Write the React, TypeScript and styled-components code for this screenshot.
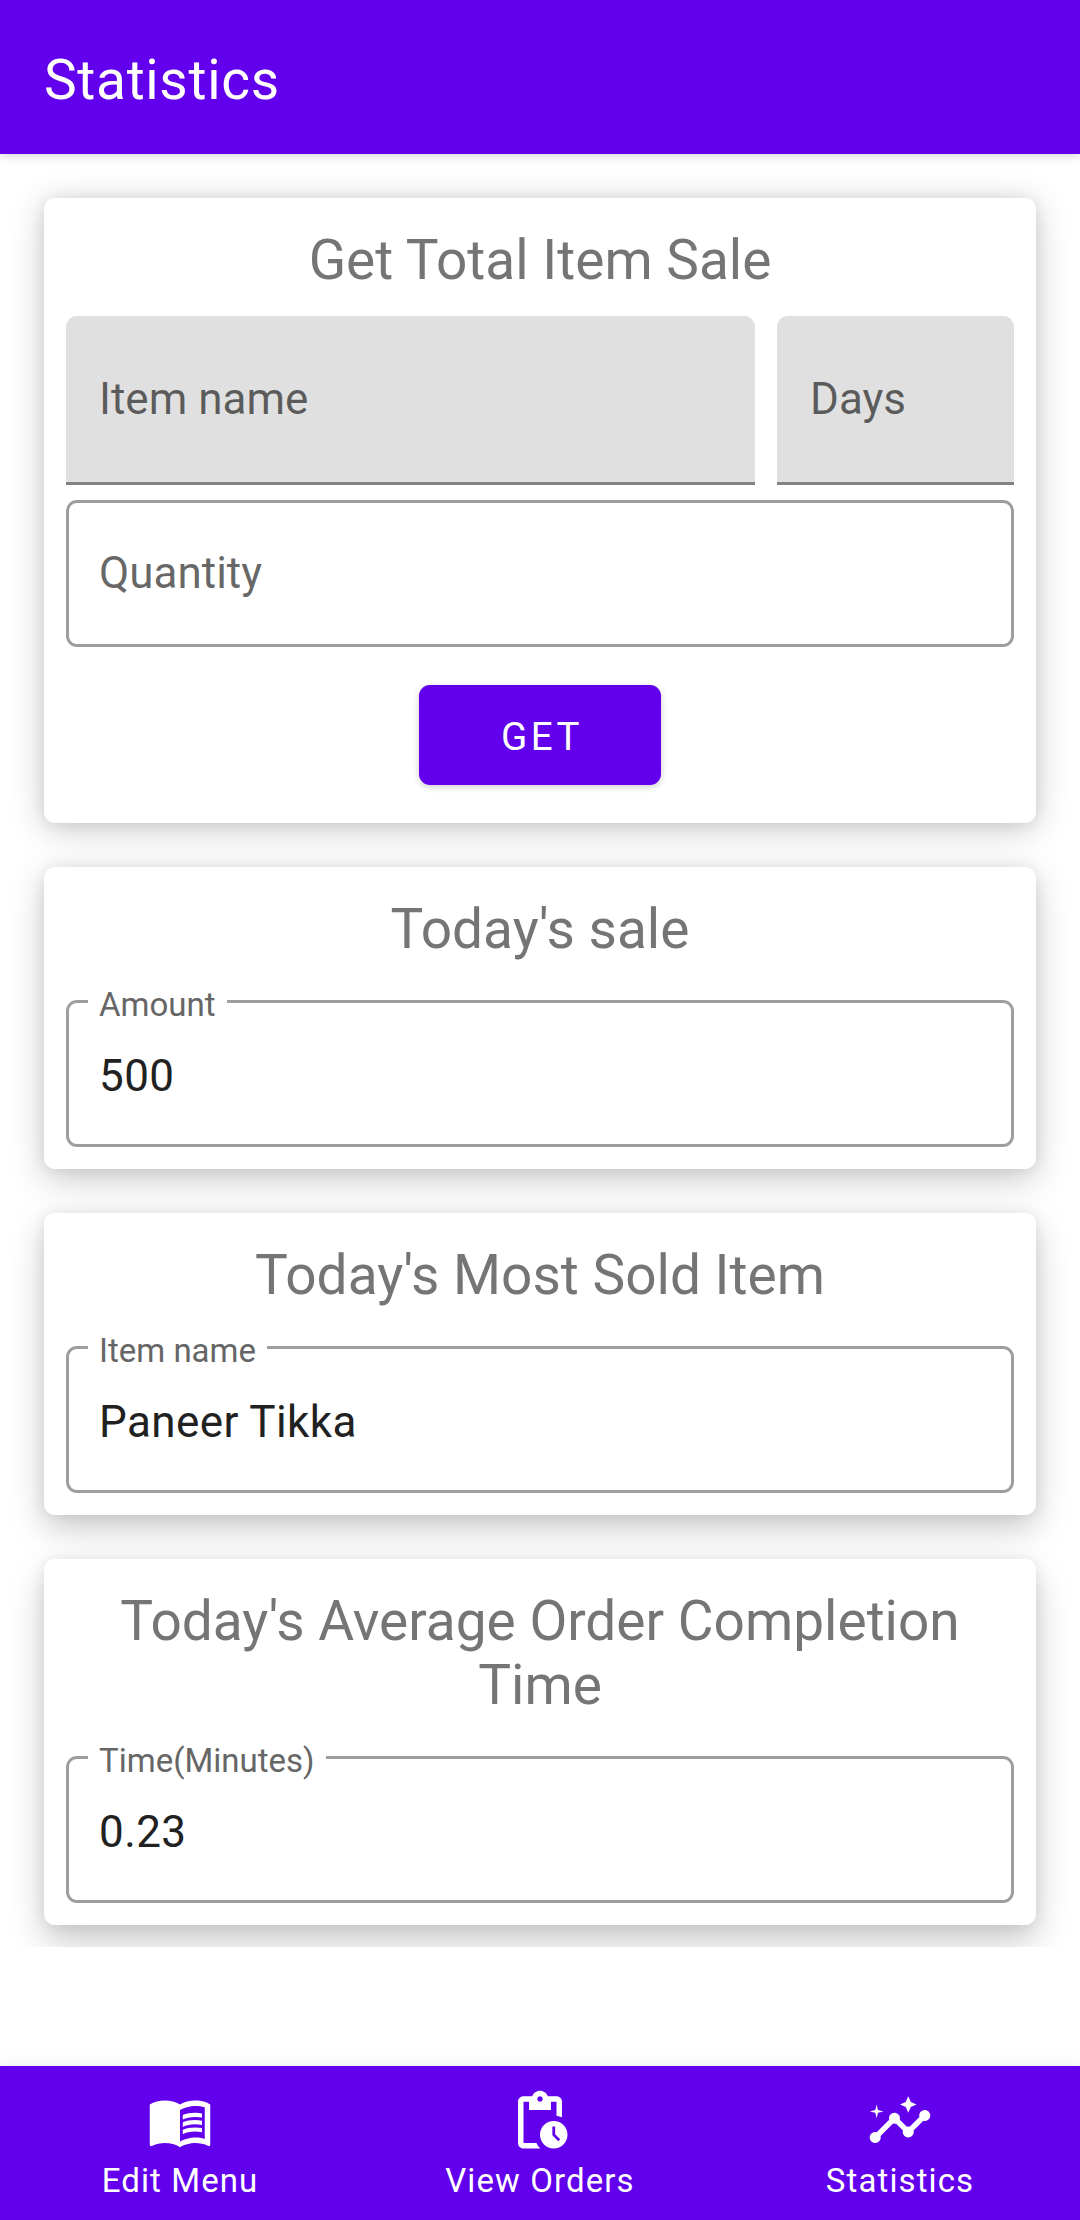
import React from "react";
import styled, { createGlobalStyle } from "styled-components";
import { MdMenuBook, MdPendingActions, MdInsights } from "react-icons/md";
import type { IconType } from "react-icons";

const PURPLE = "#6200ee";

const GlobalStyle = createGlobalStyle`
  *, *::before, *::after { box-sizing: border-box; }
  body {
    margin: 0;
    background: #fff;
    font-family: Roboto, "Noto Sans", sans-serif;
  }
`;

const Screen = styled.div`
  display: flex;
  flex-direction: column;
  width: 1080px;
  height: 2220px;
  overflow: hidden;
  background: #fff;
`;

const AppBar = styled.header`
  position: relative;
  z-index: 1;
  flex: none;
  display: flex;
  align-items: center;
  height: 154px;
  padding: 6px 44px 0;
  background: ${PURPLE};
  box-shadow: 0 2px 10px rgba(0, 0, 0, 0.15);
`;

const AppTitle = styled.h1`
  margin: 0;
  font-size: 55px;
  font-weight: 400;
  line-height: 64px;
  letter-spacing: 0.0125em;
  color: #fff;
`;

const Content = styled.main`
  flex: none;
  display: flex;
  flex-direction: column;
  gap: 44px;
  padding: 44px 44px 22px;
  overflow: hidden;
`;

const Card = styled.section<{ $drop: number }>`
  display: flex;
  flex-direction: column;
  padding: 22px;
  border-radius: 11px;
  background: #fff;
  box-shadow:
    0 0 14px rgba(0, 0, 0, 0.07),
    0 ${(p) => p.$drop}px 34px rgba(0, 0, 0, 0.22);
`;

const CardTitle = styled.h2<{ $gap: number }>`
  margin: 8px 0 ${(p) => p.$gap}px;
  font-size: 55px;
  font-weight: 400;
  line-height: 64px;
  text-align: center;
  color: #757575;
`;

const FieldRow = styled.div`
  display: grid;
  grid-template-columns: 689px 237px;
  gap: 22px;
  margin-bottom: 15px;
`;

const FilledField = styled.div`
  display: flex;
  align-items: center;
  height: 169px;
  padding: 0 33px;
  border-bottom: 3px solid #838383;
  border-radius: 11px 11px 0 0;
  background: #e0e0e0;
`;

const OutlinedField = styled.div<{ $filled?: boolean }>`
  position: relative;
  display: flex;
  align-items: center;
  height: 147px;
  padding: ${(p) => (p.$filled ? "4px 30px 0" : "0 30px 2px")};
  border: 3px solid #9e9e9e;
  border-radius: 11px;
`;

const Hint = styled.span`
  font-size: 44px;
  line-height: 52px;
  color: rgba(0, 0, 0, 0.6);
`;

const Value = styled.span`
  font-size: 44px;
  line-height: 52px;
  letter-spacing: 0.0094em;
  color: #212121;
`;

const FloatingLabel = styled.span`
  position: absolute;
  top: -17px;
  left: 19px;
  padding: 0 11px;
  font-size: 33px;
  line-height: 38px;
  color: #666;
  background: #fff;
`;

const PrimaryButton = styled.button`
  align-self: center;
  width: 242px;
  height: 100px;
  margin: 38px 0 16px;
  padding: 3px 0 0 4px;
  border: 0;
  border-radius: 11px;
  background: ${PURPLE};
  box-shadow: 0 2px 7px rgba(0, 0, 0, 0.2);
  font-family: inherit;
  font-size: 38.5px;
  letter-spacing: 0.09em;
  color: #fff;
`;

const BottomNav = styled.nav`
  flex: none;
  display: grid;
  grid-template-columns: repeat(3, 1fr);
  height: 154px;
  margin-top: auto;
  background: ${PURPLE};
  box-shadow: 0 0 16px rgba(0, 0, 0, 0.09);
`;

const NavItem = styled.a`
  display: flex;
  flex-direction: column;
  align-items: center;
  gap: 7px;
  padding-top: 22px;
  font-size: 33px;
  line-height: 39px;
  letter-spacing: 0.0333em;
  color: #fff;
`;

const stats = [
  { title: "Today's sale", label: "Amount", value: "500", drop: 10 },
  { title: "Today's Most Sold Item", label: "Item name", value: "Paneer Tikka", drop: 13 },
  { title: "Today's Average Order Completion Time", label: "Time(Minutes)", value: "0.23", drop: 16 },
];

const tabs: { label: string; Icon: IconType }[] = [
  { label: "Edit Menu", Icon: MdMenuBook },
  { label: "View Orders", Icon: MdPendingActions },
  { label: "Statistics", Icon: MdInsights },
];

export default function App() {
  return (
    <>
      <GlobalStyle />
      <Screen>
        <AppBar>
          <AppTitle>Statistics</AppTitle>
        </AppBar>
        <Content>
          <Card $drop={6}>
            <CardTitle $gap={24}>Get Total Item Sale</CardTitle>
            <FieldRow>
              <FilledField>
                <Hint>Item name</Hint>
              </FilledField>
              <FilledField>
                <Hint>Days</Hint>
              </FilledField>
            </FieldRow>
            <OutlinedField>
              <Hint>Quantity</Hint>
            </OutlinedField>
            <PrimaryButton type="button">GET</PrimaryButton>
          </Card>
          {stats.map((s) => (
            <Card key={s.title} $drop={s.drop}>
              <CardTitle $gap={39}>{s.title}</CardTitle>
              <OutlinedField $filled>
                <FloatingLabel>{s.label}</FloatingLabel>
                <Value>{s.value}</Value>
              </OutlinedField>
            </Card>
          ))}
        </Content>
        <BottomNav>
          {tabs.map(({ label, Icon }) => (
            <NavItem key={label}>
              <Icon size={66} />
              <span>{label}</span>
            </NavItem>
          ))}
        </BottomNav>
      </Screen>
    </>
  );
}
